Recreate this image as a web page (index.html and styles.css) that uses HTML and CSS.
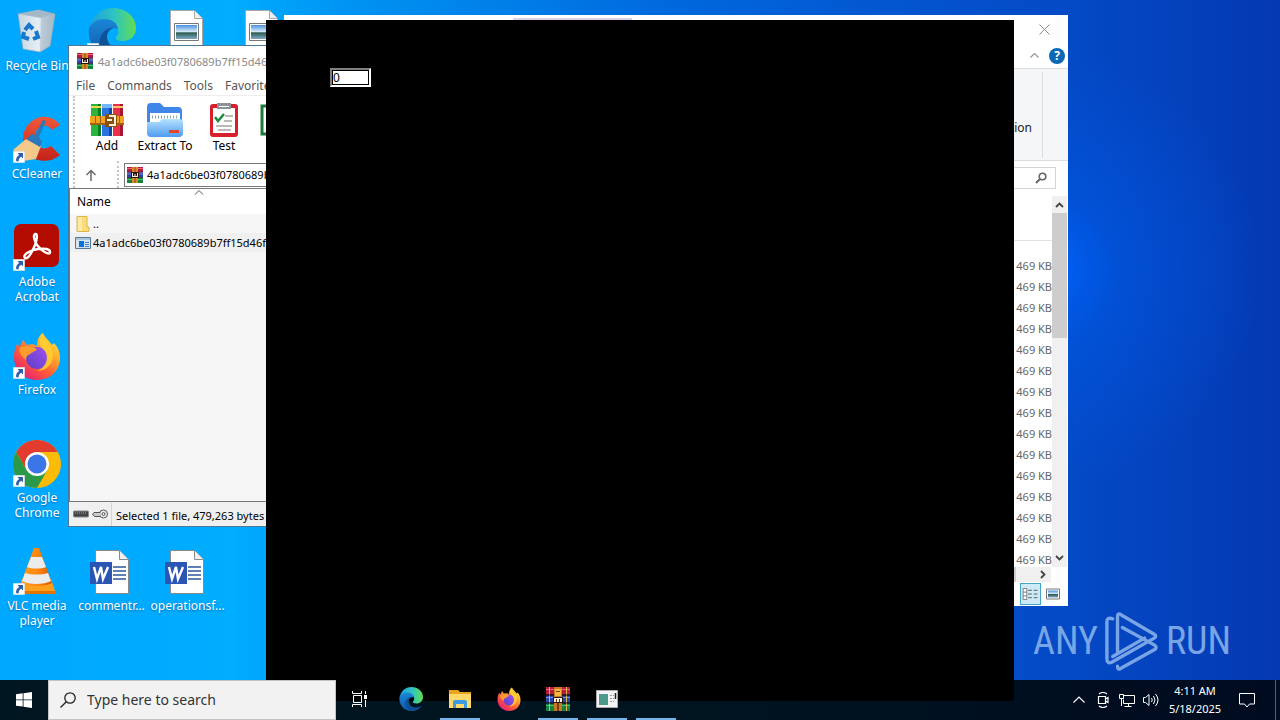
FILE: index.html
```html
<!DOCTYPE html>
<html lang="en">
<head>
<meta charset="utf-8">
<meta name="viewport" content="width=device-width, initial-scale=1">
<title>Desktop</title>
<link rel="stylesheet" href="styles.css">
</head>
<body>
<svg class="defs" aria-hidden="true">
  <defs>
    <linearGradient id="g-edge-a" x1="0" y1="0" x2="1" y2="0"><stop offset="0" stop-color="#1aa0e0"/><stop offset=".55" stop-color="#2fc5c0"/><stop offset="1" stop-color="#62dd50"/></linearGradient>
    <linearGradient id="g-edge-b" x1="0" y1="0" x2="0" y2="1"><stop offset="0" stop-color="#1b86d8"/><stop offset="1" stop-color="#1159a8"/></linearGradient>
    <linearGradient id="g-fox" x1="1" y1="0" x2=".2" y2="1"><stop offset="0" stop-color="#fff24a"/><stop offset=".35" stop-color="#ffb02b"/><stop offset=".65" stop-color="#ff5a36"/><stop offset="1" stop-color="#e3197c"/></linearGradient>
    <linearGradient id="g-fox-eye" x1="1" y1="0" x2="0" y2="1"><stop offset="0" stop-color="#a050f0"/><stop offset="1" stop-color="#5a40c8"/></linearGradient>
    <linearGradient id="g-photo" x1="0" y1="0" x2="0" y2="1"><stop offset="0" stop-color="#4a90e0"/><stop offset=".5" stop-color="#dceefa"/><stop offset=".55" stop-color="#2c5a50"/><stop offset="1" stop-color="#7fa9c8"/></linearGradient>
    <linearGradient id="g-folder" x1="0" y1="0" x2="0" y2="1"><stop offset="0" stop-color="#b5e2ff"/><stop offset="1" stop-color="#4f9cf0"/></linearGradient>
    <linearGradient id="g-cc" x1="0" y1="0" x2="0" y2="1"><stop offset="0" stop-color="#f0583c"/><stop offset="1" stop-color="#c42218"/></linearGradient>
    <linearGradient id="g-bin" x1="0" y1="0" x2="1" y2="0"><stop offset="0" stop-color="#c3d6e2"/><stop offset=".55" stop-color="#e6eef3"/><stop offset="1" stop-color="#9eb2c0"/></linearGradient>
    <linearGradient id="g-cone" x1="0" y1="0" x2="1" y2="0"><stop offset="0" stop-color="#ff9a20"/><stop offset=".5" stop-color="#ff8a10"/><stop offset="1" stop-color="#d85a00"/></linearGradient>
  </defs>
  <symbol id="shortcut" viewBox="0 0 12 12"><path fill="#fff" stroke="#b8c4cc" stroke-width=".5" d="M.2.2h11.6v11.6H.2z"/><path fill="#2f5fa8" d="M4.500 2H10v5.400L8.300 5.800C6.300 6.800 5.600 8 5.700 10.300H3.200C2.600 7.500 3.800 5.400 6.200 3.900z"/></symbol>
  <symbol id="edge" viewBox="0 0 48 48">
    <path fill="url(#g-edge-a)" d="M1 22C3 9 12 0 25 0c13 0 23 9 23 20 0 8-6 13-13 13-6 0-8-2-7-4 2-2 3-5 2-8-2-6-8-9-14-9-8 0-13 5-15 10z"/>
    <path fill="url(#g-edge-b)" d="M1 20c3-6 9-9 15-9 7 0 13 3 14 10-4-2-10 0-11 7-1 8 8 15 18 13 4-1 6-2 8-3-4 6-11 10-20 10C10 48-1 36 1 20z"/>
    <path fill="#0c4a8c" opacity=".75" d="M25 47C15 45 9 36 13 28c2-5 7-8 13-9-4 2-7 5-7 10 0 8 9 14 18 12 4-1 6-2 8-3-4 6-11 10-20 9z"/>
  </symbol>
  <symbol id="firefox" viewBox="0 0 48 48">
    <path fill="url(#g-fox)" d="M24 48C11 48 1 38 1 25c0-6 2-12 4-14l1 5 4-8 4 5c4-1 7-1 10 1 0-6 2-11 6-13 2 5 6 7 9 12l2-2c4 4 6 9 6 15 0 13-10 22-23 22z"/>
    <circle cx="24" cy="26" r="11" fill="url(#g-fox-eye)"/>
    <path fill="#ff9a2d" d="M6 16c5-2 9-3 12-1 3 0 5 1 6 3-3 1-5 3-7 4-3 1-4 3-4 6-4-3-7-7-7-12z"/>
    <path fill="#ffcf32" opacity=".85" d="M30 1c0 9 14 15 9 28-2 6-8 10-15 10 11-4 13-17 5-23-4-4-2-10 1-15z"/>
  </symbol>
  <symbol id="winrar" viewBox="0 0 16 16">
    <path fill="#b01c48" d="M0 0h16v5H0z"/><path fill="#2d43a5" d="M0 5.500h16v5H0z"/><path fill="#16803c" d="M0 11h16v5H0z"/>
    <path fill="#ff6070" d="M0 1h16v1H0z"/><path fill="#6f86ec" d="M0 6.500h16v1H0z"/><path fill="#45c070" d="M0 12h16v1H0z"/>
    <path fill="#241428" d="M0 4.800h16v.8H0zM0 10.300h16v.8H0z"/>
    <path fill="#d98a2a" d="M5 0h6v16H5z"/><path fill="#8c4a12" d="M7.500 0h1v16h-1z"/>
    <path fill="#2a1410" d="M4 5h8v6H4z"/><path fill="#fff4e0" d="M5 6h1v3h1.500V7h1v2H10V6h1v4H5z"/>
  </symbol>
  <symbol id="winrar-large" viewBox="0 0 24 24">
    <path fill="#b81c3c" d="M0 0h24v7.500H0z"/><path fill="#2846a8" d="M0 8.500h24v7H0z"/><path fill="#16803c" d="M0 16.500h24V24H0z"/>
    <path fill="#f0607c" d="M0 2h24v1H0z"/><path fill="#6f8eec" d="M0 10h24v1H0z"/><path fill="#45c070" d="M0 18h24v1H0z"/>
    <path fill="#d9b84a" d="M3 0h1v24H3zM20 0h1v24h-1z"/><path fill="#1c1428" d="M0 7.500h24v1H0zM0 15.500h24v1H0z"/>
    <path fill="#c87a22" d="M8 0h8v24H8z"/><path fill="#f6b83c" d="M9 2h6v7H9z"/><path fill="#7a3c10" d="M11 16h2v8h-2zM10 4h4v1h-4z"/>
    <path fill="#2a1410" d="M7 10h10v6H7z"/><path fill="#fff4e0" d="M8 11h8v4H8z"/><path fill="#5c2a10" d="M10 12h1v3h-1zM13 12h1v3h-1z"/>
  </symbol>
  <symbol id="books" viewBox="0 0 34 34">
    <path fill="#2bb53c" d="M1 1h10v32H1z"/><path fill="#2c72dc" d="M12 1h10v32H12z"/><path fill="#e8304c" d="M23 1h10v32H23z"/>
    <path fill="#0b7b24" d="M8 1h3v32H8z"/><path fill="#12479d" d="M19 1h3v32h-3z"/><path fill="#a61632" d="M30 1h3v32h-3z"/>
    <path fill="#f0d84a" d="M1 3h10v2H1z"/><path fill="#75b8ff" d="M12 1h10v4H12z"/><path fill="#ffc06a" d="M23 3h10v2H23z"/>
    <path fill="#f3a31f" d="M0 13h34v9H0z"/><path fill="#a4600b" d="M0 20h34v2H0zM5 13h1v9H5zM10 13h1v9h-1zM29 13h1v9h-1z"/>
    <path fill="#8a5010" d="M15 11h12v13H15z"/><path fill="none" stroke="#fff2d8" stroke-width="2" d="M19 13h6v9h-6M17 17h5"/>
  </symbol>
  <symbol id="word" viewBox="3 0 48 48">
    <path fill="#fff" stroke="#8a8a8a" d="M10.500 2.500h24l9 9v34h-33z"/><path fill="#f0f0f0" stroke="#8a8a8a" d="M34.500 2.500v9h9"/>
    <path stroke="#2b579a" stroke-width="1.500" d="M28 19h13M28 23h13M28 27h13M28 31h13"/>
    <path fill="#2b55b5" d="M5 14h22v22H5z"/>
    <path fill="none" stroke="#fff" stroke-width="2.400" d="M9 19l3 12 4-12 2 12 5-12"/>
  </symbol>
  <symbol id="photo-file" viewBox="1 0 48 48">
    <path fill="#fff" stroke="#a8a8a8" d="M8.500 2.500h24l8 8v35h-32z"/><path fill="#eee" stroke="#a8a8a8" d="M32.500 2.500v8h8"/>
    <path fill="#fff" stroke="#777" d="M12.500 15.500h24v17h-24z"/><path fill="url(#g-photo)" d="M14 17h21v14H14z"/>
  </symbol>
</svg>

<main class="desktop">
  <ul class="shortcuts">
    <li class="shortcut c1 r1"><svg class="pic" viewBox="1 0 48 48"><path fill="url(#g-bin)" stroke="#8fa5b4" stroke-width=".7" d="M6 6l5 35 17 3 10-6 5-32-16-4z"/><path fill="#a4b9c8" d="M6 6l20-4 17 4-14 4z"/><path fill="#a9bccb" opacity=".6" d="M29 10l14-4-5 32-10 6z"/><g fill="none" stroke="#1677cc" stroke-width="4"><path d="M13 22l4-5 4 4M24 23l2 6-5 2M17 31l-6-2 1-5"/></g></svg><span>Recycle Bin</span></li>
    <li class="shortcut c1 r2"><svg class="pic" viewBox="0 0 48 48"><path fill="url(#g-cc)" d="M47 9C41 0 28-2 19 5 9 12 7 27 14 37c7 9 23 11 33 2l-9-9c-6 4-12 3-15-3-3-7 0-16 7-17 4-1 7 1 9 4z"/><path fill="#f4c98a" d="M0 34l13-11 15 7-5 13-13 2z"/><path fill="#2c78b8" d="M13 23l6-5 3 1 8-15 3 1-7 16 3 5-2 5z"/></svg><svg class="link"><use href="#shortcut"/></svg><span>CCleaner</span></li>
    <li class="shortcut c1 r3"><svg class="pic" viewBox="0 0 48 48"><rect x="1" y="0" width="45" height="43" rx="7" fill="#b30b00"/><path fill="none" stroke="#fff" stroke-width="2.400" d="M12 34c-3-3 5-8 13-9 7-1 12 0 12 3 0 4-9-1-13-7-3-5-4-10-2-11 3-1 2 6 0 11-3 7-7 15-10 13z"/></svg><svg class="link"><use href="#shortcut"/></svg><span>Adobe Acrobat</span></li>
    <li class="shortcut c1 r4"><svg class="pic"><use href="#firefox"/></svg><svg class="link"><use href="#shortcut"/></svg><span>Firefox</span></li>
    <li class="shortcut c1 r5"><svg class="pic" viewBox="0 0 48 48"><circle cx="24" cy="24" r="24" fill="#fbbc08"/><path fill="#e33b2e" d="M3.200 12A24 24 0 0 1 44.800 12H24L13.600 30z"/><path fill="#2a9a48" d="M3.200 12A24 24 0 0 0 24 48l10.400-18L24 24l-10.400 6z"/><circle cx="24" cy="24" r="12" fill="#fff"/><circle cx="24" cy="24" r="9.500" fill="#3a76e8"/></svg><svg class="link"><use href="#shortcut"/></svg><span>Google Chrome</span></li>
    <li class="shortcut c1 r6"><svg class="pic" viewBox="1 0 48 48"><path fill="#ffa01c" d="M10 31h29l5 15H6z"/><path fill="#e47300" d="M6 43h38v3H6z"/><path fill="url(#g-cone)" d="M22 0h5l13 35c-6 4-25 4-31 0z"/><path fill="#ececec" d="M19 9h11l4 10c-5 2-14 2-19 0zM13 25c7 2 16 2 23 0l3 8c-7 4-22 4-29 0z"/></svg><svg class="link"><use href="#shortcut"/></svg><span>VLC media player</span></li>
    <li class="shortcut c2 r1"><svg class="pic"><use href="#edge"/></svg><svg class="link"><use href="#shortcut"/></svg></li>
    <li class="shortcut c2 r6"><svg class="pic"><use href="#word"/></svg><span>commentr...</span></li>
    <li class="shortcut c3 r1"><svg class="pic"><use href="#photo-file"/></svg></li>
    <li class="shortcut c3 r6"><svg class="pic"><use href="#word"/></svg><span>operationsf...</span></li>
    <li class="shortcut c4 r1"><svg class="pic"><use href="#photo-file"/></svg></li>
  </ul>

  <div class="brand"><span>ANY</span><svg viewBox="0 0 58 64"><g fill="none" stroke="currentColor" stroke-width="3.500" stroke-linejoin="round" stroke-linecap="round"><path d="M9 9Q3 7 3 12v38q0 6 5 4l44-25q3-2 0-4L18 5q-4-3-4 2v36"/><path d="M19 18l33 18q4 3 0 5L18 60q-4 3-4-2M9 48l33-19"/></g></svg><span>RUN</span></div>

  <section class="window archive" aria-label="Archive">
    <header class="archive-title"><svg class="mini"><use href="#winrar"/></svg><span>4a1adc6be03f0780689b7ff15d46ff</span></header>
    <nav class="menu"><button>File</button><button>Commands</button><button>Tools</button><button>Favorites</button></nav>
    <div class="tools">
      <button class="tool-add"><svg viewBox="0 0 34 34"><use href="#books"/></svg>Add</button>
      <button class="tool-extract"><svg viewBox="0 0 36 34"><path fill="#3f86e8" d="M0 4q0-4 4-4h9l4 4h14q4 0 4 4v20H0z"/><path fill="#fff" d="M3 10h30v10H3z"/><path stroke="#8aa" stroke-dasharray="1 2" stroke-width="3" d="M5 14h26"/><path fill="url(#g-folder)" d="M0 19h12l3-3h17q4 0 4 4v10q0 4-4 4H4q-4 0-4-4z"/><path fill="#e8442c" d="M22 27h10v3H22z"/></svg>Extract To</button>
      <button class="tool-test"><svg viewBox="0 0 28 34"><rect width="28" height="33" y="1" rx="3" fill="#d8202c"/><path fill="#fff" d="M3 5h22v25H3z"/><path fill="#8c929a" d="M7 0h14v6H7z"/><path fill="#fff" d="M9 3h10v1H9z"/><path fill="none" stroke="#1b8c3c" stroke-width="2.500" d="M5 14l3 4 6-7"/><path stroke="#777" stroke-width="1.200" d="M15 13h8M14 18h8M6 23h16M8 27h13"/></svg>Test</button>
      <span class="tool-view"><svg viewBox="0 0 28 34"><path fill="#fff" stroke="#1d7c3c" stroke-width="3" d="M2 3h24v28H2z"/><path stroke="#999" d="M7 10h15M7 14h15M7 18h15M7 22h15"/></svg></span>
    </div>
    <div class="address">
      <button class="up" aria-label="Up"><svg viewBox="0 0 12 12"><path fill="none" stroke="#6a6a6a" stroke-width="1.500" d="M6 12V1.500M1.500 6L6 1.500 10.500 6"/></svg></button>
      <div class="path"><svg class="mini"><use href="#winrar"/></svg><span>4a1adc6be03f0780689b7ff15d46ff</span></div>
    </div>
    <div class="listing">
      <svg class="sort" viewBox="0 0 10 5"><path fill="none" stroke="#555" d="M1 4.500l4-4 4 4"/></svg>
      <table>
        <thead><tr><th>Name</th></tr></thead>
        <tbody>
          <tr><td><svg viewBox="0 0 16 16"><path fill="#fbdc7c" stroke="#dfb54a" d="M2 .5h10v10.500h2v4.500H2z"/><path fill="#ffeaa8" d="M3 1h4v14H3z"/></svg>..</td></tr>
          <tr class="picked"><td><svg viewBox="0 0 16 16"><path fill="#d6e4ee" stroke="#5a7894" d="M.5 2.500h15v11H.5z"/><path fill="#a9c6da" d="M1 3h14v2H1z"/><path fill="#0b72d8" d="M4 6h5v6H4z"/><path stroke="#3a8ad8" d="M10 7.500h4M10 9.500h4M10 11.500h4"/></svg>4a1adc6be03f0780689b7ff15d46ff</td></tr>
        </tbody>
      </table>
    </div>
    <footer class="status">
      <svg viewBox="0 0 16 10"><rect x=".5" y="2" width="15" height="6" rx="1" fill="#444" stroke="#888"/><path stroke="#aaa" stroke-dasharray="1 1" d="M2 4h11"/></svg>
      <svg viewBox="0 0 16 10"><circle cx="11.500" cy="5" r="4" fill="#eee" stroke="#555"/><circle cx="11.500" cy="5" r="1.500" fill="none" stroke="#555"/><path fill="#ccc" stroke="#555" d="M8 3.500H2L.5 5.500 3 7.500h5"/></svg>
      <span>Selected 1 file, 479,263 bytes</span>
    </footer>
  </section>

  <section class="window explorer" aria-label="File Explorer">
    <header class="explorer-title"><i class="context-tab"></i><button aria-label="Close"><svg viewBox="0 0 11 11"><path stroke="#8a8a8a" d="M.5.5l10 10M10.500.5l-10 10"/></svg></button></header>
    <div class="tabs"><svg class="fold" viewBox="0 0 9 5"><path fill="none" stroke="#999" stroke-width="1.300" d="M.5 4.500l4-4 4 4"/></svg><button class="help" aria-label="Help">?</button></div>
    <div class="ribbon"><span>tion</span></div>
    <div class="find"><div class="find-box"><svg viewBox="0 0 12 12"><circle cx="7.500" cy="4.500" r="3.300" fill="none" stroke="#666" stroke-width="1.600"/><path stroke="#666" stroke-width="2" d="M5 7L1 11"/></svg></div></div>
    <div class="files">
      <div class="sizes">
        <table><tbody>
          <tr><td>469 KB</td></tr><tr><td>469 KB</td></tr><tr><td>469 KB</td></tr><tr><td>469 KB</td></tr><tr><td>469 KB</td></tr>
          <tr><td>469 KB</td></tr><tr><td>469 KB</td></tr><tr><td>469 KB</td></tr><tr><td>469 KB</td></tr><tr><td>469 KB</td></tr>
          <tr><td>469 KB</td></tr><tr><td>469 KB</td></tr><tr><td>469 KB</td></tr><tr><td>469 KB</td></tr><tr><td>469 KB</td></tr>
        </tbody></table>
      </div>
      <div class="vbar"><svg viewBox="0 0 9 6"><path fill="none" stroke="#444" stroke-width="1.800" d="M1 5l3.500-3.500L8 5"/></svg><i></i><svg viewBox="0 0 9 6"><path fill="none" stroke="#444" stroke-width="1.800" d="M1 1l3.500 3.500L8 1"/></svg></div>
    </div>
    <div class="hbar"><svg viewBox="0 0 6 9"><path fill="none" stroke="#444" stroke-width="1.800" d="M1 1l3.500 3.500L1 8"/></svg></div>
    <footer class="views">
      <button class="on" aria-label="Details"><svg viewBox="0 0 17 13"><path fill="#fff" stroke="#777" d="M.5.5h4v12h-4zM.5 4.500h4M.5 8.500h4"/><path stroke="#555" stroke-dasharray="4 2" d="M6 2.500h11M6 6.500h11M6 10.500h11"/></svg></button>
      <button aria-label="Thumbnails"><svg viewBox="0 0 14 11"><path fill="#fff" stroke="#777" d="M.5.5h13v10H.5z"/><path fill="url(#g-photo)" d="M2 2h10v7H2z"/></svg></button>
    </footer>
  </section>

  <section class="blackout" aria-label="Program"><input type="text" value="0" aria-label="Value"></section>
</main>

<footer class="taskbar">
  <button class="start" aria-label="Start"><svg viewBox="0 0 16 16"><path fill="#fff" d="M0 2.300L6.700 1.300v6.200H0zM7.500 1.200L16 0v7.500H7.500zM0 8.300h6.700v6.300L0 13.700zM7.500 8.300H16V16l-8.500-1.200z"/></svg></button>
  <label class="search"><svg viewBox="0 0 16 16"><circle cx="10" cy="6" r="5.200" fill="none" stroke="#222" stroke-width="1.300"/><path stroke="#222" stroke-width="1.300" d="M6.300 9.700L.5 15.500"/></svg><input type="text" placeholder="Type here to search" aria-label="Search"></label>
  <nav class="apps">
    <button aria-label="Task View"><svg class="view" viewBox="0 0 16 16"><path fill="none" stroke="#fff" d="M.5 0v2.500h9V0M.5 16v-2.500h9V16M1.500 4.500h8v7h-8zM13.500 0v3M13.500 9v7"/><path fill="#fff" d="M12 4h3v4h-3z"/></svg></button>
    <button class="edge-app" aria-label="Edge"><svg><use href="#edge"/></svg></button>
    <button class="open" aria-label="File Explorer"><svg viewBox="0 0 24 24"><path fill="#e8a51c" d="M1 3h9l2 2h11v16H1z"/><path fill="#ffd96a" d="M1 7h22v14H1z"/><path fill="#3d9be0" d="M5 21v-6q0-2 2-2h10q2 0 2 2v6h-3v-4H8v4z"/></svg></button>
    <button aria-label="Firefox"><svg><use href="#firefox"/></svg></button>
    <button class="open" aria-label="WinRAR"><svg><use href="#winrar-large"/></svg></button>
    <button class="open" aria-label="Program"><svg viewBox="0 0 24 24"><path fill="#f4f4f4" stroke="#aaa" d="M1.500 3.500h21v17h-21z"/><path fill="#4c9a8c" d="M4 7h9v11H4z"/><path stroke="#999" stroke-dasharray="2 1" d="M15 8.500h4M15 11.500h4M15 14.500h4"/><path stroke="#222" stroke-width="1.500" d="M20.500 6v6"/></svg></button>
    <button class="open" aria-label="Window"></button>
  </nav>
  <div class="tray">
    <svg viewBox="0 0 16 16"><path fill="none" stroke="#fff" stroke-width="1.200" d="M2.500 10.500L8 5l5.500 5.500"/></svg>
    <svg viewBox="0 0 16 16"><path fill="none" stroke="#fff" stroke-width="1.200" d="M3.500 4.500h7v7h-7zM10.500 7l2.500-1.500v5l-2.500-1.500M4 2q4-3 8 0M4 14q4 3 8 0"/></svg>
    <svg viewBox="0 0 16 16"><path fill="none" stroke="#fff" d="M5 3.500h10.500v8H4.500v-4M.5 2.500h4v4h-4zM2.500 6v8M5.500 14.500h7M9.500 12v2"/></svg>
    <svg viewBox="0 0 16 16"><path fill="none" stroke="#fff" d="M.5 5.500h2L6 2.500v11l-3.500-3h-2zM8.500 6q1.500 2 0 4M10.500 4q3 4 0 8M12.500 2q5 6 0 12"/></svg>
    <time>4:11 AM<br>5/18/2025</time>
    <svg class="note" viewBox="0 0 16 16"><path fill="none" stroke="#fff" d="M.5 1.500h15v10.500h-5L8 15l-2.500-3h-5z"/></svg>
  </div>
</footer>
</body>
</html>
```
FILE: styles.css
```css
* { box-sizing: border-box; }
body {
  margin: 0;
  height: 100vh;
  display: flex;
  flex-direction: column;
  overflow: hidden;
  background: linear-gradient(90deg, #001620, #001420 55%, #000b20);
  font: 12px/15px "Noto Sans", "Open Sans", sans-serif;
  color: #000;
}
button { margin: 0; padding: 0; border: 0; background: none; font: inherit; color: inherit; }
svg { display: block; flex: none; }
table { border-collapse: collapse; width: 100%; }
th, td { padding: 0; font-weight: 400; text-align: left; }
.defs { position: absolute; width: 0; height: 0; }
.mini { width: 16px; height: 16px; }

.desktop {
  position: relative;
  flex: 1;
  background:
    radial-gradient(circle at 1040px 270px, #0062fa 0, rgba(0, 86, 224, .6) 80px, rgba(0, 70, 200, 0) 220px),
    linear-gradient(90deg, #00a8ff 0, #00adff 18%, #0096f4 26%, #0069de 52%, #0450cc 75%, #0448c4 85%, #0439b2 100%);
}

.shortcuts {
  margin: 0;
  padding: 8px 0 0;
  list-style: none;
  display: grid;
  grid-template-columns: 74px repeat(3, 75px);
  grid-template-rows: repeat(6, 108px);
}
.shortcut {
  position: relative;
  display: flex;
  flex-direction: column;
  align-items: center;
  gap: 2px;
  color: #fff;
  text-align: center;
  text-shadow: 0 1px 2px #0468a8;
}
.shortcut span { max-width: 72px; }
.r1 span { white-space: nowrap; }
.pic { width: 48px; height: 48px; }
.link { position: absolute; left: 13px; top: 35px; width: 12px; height: 12px; }
.c1 { grid-column: 1; }
.c2 { grid-column: 2; }
.c3 { grid-column: 3; }
.c4 { grid-column: 4; }
.r1 { grid-row: 1; }
.r2 { grid-row: 2; }
.r3 { grid-row: 3; }
.r4 { grid-row: 4; }
.r5 { grid-row: 5; }
.r6 { grid-row: 6; }

.brand {
  position: absolute;
  right: 49px;
  bottom: 7px;
  display: flex;
  align-items: center;
  gap: 6px;
  color: #79a5e6;
  font: 38px/64px "Liberation Sans Narrow", "Roboto Condensed", "DejaVu Sans Condensed", sans-serif;
}
.brand svg { width: 56px; height: 62px; }

.window { position: absolute; display: flex; flex-direction: column; overflow: hidden; background: #fff; white-space: nowrap; }

.archive { left: 68px; top: 45px; bottom: 153px; width: 400px; border: 1px solid #4a7896; }
.archive-title { display: flex; align-items: center; gap: 5px; height: 30px; padding-left: 8px; font-size: 11px; color: #8a8a8a; }
.menu { display: flex; gap: 12px; height: 20px; padding-left: 7px; color: #555; border-bottom: 1px solid #eee; }
.tools { display: flex; height: 65px; margin-left: 4px; border-left: 2px dotted #c4c4c4; padding-top: 7px; }
.tools button, .tools span { display: flex; flex-direction: column; align-items: center; gap: 1px; }
.tools svg { height: 34px; width: 36px; }
.tool-add { width: 64px; }
.tool-extract { width: 52px; }
.tool-test { width: 66px; }
.tool-view { width: 34px; }
.address { display: flex; align-items: center; height: 27px; margin-left: 4px; border-left: 2px dotted #c4c4c4; }
.up { width: 44px; height: 27px; padding-left: 10px; border-right: 2px dotted #c4c4c4; }
.up svg { width: 12px; height: 12px; }
.path { flex: 1; display: flex; align-items: center; gap: 4px; height: 24px; margin-left: 5px; padding-left: 2px; border: 1px solid #777; font-size: 11px; }
.listing { flex: 1; position: relative; border: solid #777; border-width: 1px 0 1px 1px; background: #f6f6f6; }
.sort { position: absolute; left: 124px; top: 1px; width: 10px; height: 5px; }
.listing th { height: 25px; padding-left: 7px; background: #fff; vertical-align: middle; }
.listing td { height: 19px; padding-left: 5px; font-size: 11px; }
.listing td svg { float: left; width: 16px; height: 16px; margin-right: 2px; }
.listing .picked { background: #f0f0f0; }
.status { display: flex; align-items: center; gap: 3px; height: 24px; padding-left: 4px; background: #f0f0f0; }
.status svg { width: 16px; height: 10px; }
.status span { padding: 5px 0 3px 4px; border-left: 1px solid #d4d4d4; font-size: 11px; }

.explorer { left: 284px; right: 212px; top: 15px; bottom: 74px; }
.explorer-title { position: relative; display: flex; justify-content: flex-end; height: 28px; padding-right: 18px; }
.explorer-title svg { width: 11px; height: 11px; }
.context-tab { position: absolute; left: 229px; top: 3px; width: 119px; height: 25px; background: #dcd0e6; }
.tabs { display: flex; align-items: center; justify-content: flex-end; gap: 10px; height: 25px; padding-right: 3px; }
.fold { width: 9px; height: 5px; }
.help { width: 16px; height: 16px; border-radius: 50%; background: #0b68b4; color: #fff; font-weight: 700; line-height: 16px; }
.ribbon { display: flex; justify-content: flex-end; align-items: center; height: 93px; padding: 3px 25px; border: solid #dcdfe2; border-width: 1px 0; background: #f5f6f7; }
.ribbon span { height: 86px; padding: 48px 10px 0 0; border-right: 1px solid #dcdfe2; color: #222; }
.find { padding: 6px 12px 7px; }
.find-box { display: flex; align-items: center; justify-content: flex-end; height: 22px; padding-right: 8px; border: 1px solid #d4d4d4; }
.find svg { width: 12px; height: 12px; }
.files { flex: 1; display: flex; min-height: 0; }
.sizes { flex: 1; overflow: hidden; padding-top: 44px; }
.sizes table { border-top: 1px solid #e2e2e2; border-collapse: separate; border-spacing: 0; padding-top: 14px; }
.sizes td { height: 21px; text-align: right; font-size: 11px; color: #666; }
.vbar { display: flex; flex-direction: column; align-items: center; justify-content: space-between; width: 15px; margin-right: 1px; padding: 6px 0; background: #f0f0f0; }
.vbar svg { width: 9px; height: 6px; }
.vbar i { width: 15px; height: 125px; margin: 5px 0 auto; background: #cdcdcd; }
.hbar { display: flex; align-items: center; justify-content: flex-end; height: 15px; margin-right: 17px; padding-right: 5px; background: linear-gradient(90deg, #cdcdcd calc(100% - 35px), #f0f0f0 0); }
.hbar svg { width: 6px; height: 9px; }
.views { display: flex; justify-content: flex-end; height: 24px; padding: 1px 5px 0; gap: 1px; }
.views button { display: flex; align-items: center; justify-content: center; width: 21px; height: 22px; }
.views .on { background: #cdeaf6; border: 1px solid #43a6c8; }
.views svg { width: 14px; height: 12px; }
.views .on svg { width: 17px; }

.blackout { position: absolute; z-index: 2; inset: 20px 266px -21px; padding: 48px 64px; background: #000; }
.blackout input { display: block; width: 41px; height: 19px; padding: 0 1px; border: 2px solid; border-color: #808080 #fff #fff #808080; outline: 1px solid #000; outline-offset: -3px; border-radius: 0; background: #fff; font: 12px/14px "Noto Sans", sans-serif; }

.taskbar { position: relative; z-index: 3; display: flex; height: 40px; color: #fff; }
.start { display: flex; align-items: center; justify-content: center; width: 48px; }
.start svg { width: 16px; height: 16px; }
.search { display: flex; align-items: center; gap: 11px; width: 288px; padding-left: 11px; border: 1px solid #c4c4c4; background: #f2f2f2; }
.search svg { width: 16px; height: 16px; }
.search input { flex: 1; min-width: 0; padding: 0; border: 0; outline: 0; background: none; font: 14px/20px "Noto Sans", "Open Sans", sans-serif; }
.search input::placeholder { color: #333; opacity: 1; }
.apps { display: flex; gap: 9px; padding-left: 4px; }
.apps button { display: flex; align-items: center; justify-content: center; width: 40px; border-bottom: 2px solid transparent; }
.apps .edge-app { margin-left: 2px; }
.apps .open { border-color: #76b5ea; }
.apps svg { width: 24px; height: 24px; }
.apps .view { width: 16px; height: 16px; }
.tray { display: flex; align-items: center; gap: 8px; margin-left: auto; padding-right: 20px; margin-right: 4px; border-right: 1px solid #59606c; }
.tray svg { width: 16px; height: 16px; }
.tray time { width: 56px; font-size: 11px; line-height: 18px; text-align: center; }
.tray .note { margin-left: 8px; }
```
